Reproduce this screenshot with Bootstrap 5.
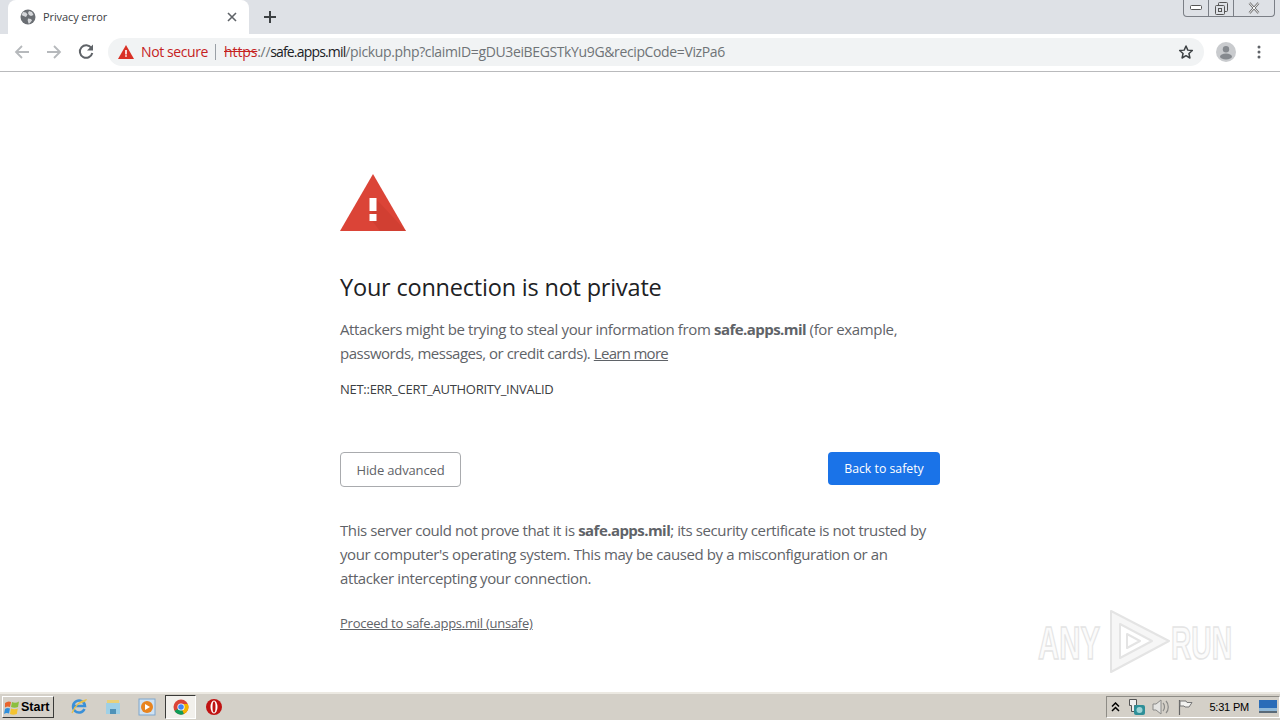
<!DOCTYPE html>
<html lang="en">
<head>
    <meta charset="UTF-8">
    <meta name="viewport" content="width=device-width, initial-scale=1.0">
    <title>Privacy error</title>
    <link href="https://cdn.jsdelivr.net/npm/bootstrap@5.3.0/dist/css/bootstrap.min.css" rel="stylesheet">
    <style>
        html, body { height: 100%; overflow: hidden; }
        body { width: 1280px; height: 720px; font-family: "Open Sans", "Noto Sans", sans-serif; background: #fff; color: #5f6368; }

        /* tab strip */
        .tab-strip { height: 34px; background: #dee1e6; padding-left: 8px; }
        .chrome-tab { width: 241px; height: 34px; background: #fff; border-radius: 8px 8px 0 0; padding: 0 12px 0 12px; font-size: 11px; color: #3c4043; }
        .tab-title { margin-left: 7px; letter-spacing: -.1px; }
        .new-tab { margin-left: 14px; }
        .win-buttons { height: 17px; border: 1px solid #7b7f86; border-top: 0; border-radius: 0 0 4px 4px; margin-right: 5px; align-self: flex-start; }
        .win-buttons > div { height: 16px; display: flex; align-items: center; justify-content: center; border-right: 1px solid #7b7f86; }
        .win-buttons > div:last-child { border-right: 0; }
        .win-min, .win-max { width: 25px; }
        .win-close { width: 40px; }

        /* toolbar */
        .tool-bar { height: 38px; background: #fff; border-bottom: 1px solid #b9babc; padding: 0 0 1px 14px; }
        .nav-gap { width: 32px; }
        .reload-icon { margin-left: 15px; }
        .omnibox { width: 1096px; height: 28px; margin-left: 13px; background: #f1f3f4; border-radius: 14px; padding: 0 10px 2px 10px; font-size: 14px; white-space: nowrap; letter-spacing: -.4px; }
        .warn-label { color: #c5221f; margin-left: 7px; }
        .omni-sep { width: 1px; height: 16px; background: #9aa0a6; margin: 2px 8px 0 7px; }
        .url-scheme { color: #c5221f; text-decoration: line-through; letter-spacing: -.1px; }
        .url-host { color: #202124; letter-spacing: -.83px; }
        .url-rest { color: #6f7377; letter-spacing: -.37px; }
        .omni-icon { margin-top: 2px; }
        .avatar { margin-left: 12px; }
        .menu-dots { margin-left: 21px; }

        /* interstitial */
        .page-area { height: 620px; }
        .interstitial { width: 600px; margin-left: 340px; padding-top: 101px; font-size: 15px; line-height: 24px; }
        .warn-icon { display: block; width: 66px; height: 58px; margin-bottom: 41px; }
        .main-head { font-size: 23.5px; line-height: 30px; font-weight: 400; color: #202124; margin: 0 0 15px; letter-spacing: -.2px; }
        .main-text { margin: 0; letter-spacing: -.36px; }
        .main-text b, .details-text b { color: #5f6368; font-weight: 700; letter-spacing: -.55px; }
        .main-text a { color: #5f6368; letter-spacing: -.7px; }
        .main-line-two { letter-spacing: -.48px; }
        .err-code { font-size: 13px; line-height: 16px; color: #3c4043; margin: 16px 0 0; text-transform: uppercase; letter-spacing: -.27px; }
        .btn-row { margin-top: 55px; }
        .btn-hide { width: 121px; height: 35px; padding: 2px 0 0; font-size: 13px; line-height: 1; letter-spacing: -.15px; color: #5f6368; background: #fff; border: 1px solid #a9abae; border-radius: 4px; }
        .btn-back { width: 112px; height: 33px; padding: 2px 0 0; font-size: 12.3px; line-height: 1; color: #fff; background: #1a73e8; border: 0; border-radius: 4px; }
        .details-text { margin: 31px 0 0; letter-spacing: -.4px; }
        .proceed { display: block; margin-top: 21px; font-size: 13px; color: #5f6368; letter-spacing: -.25px; }

        /* watermark */
        .any-run { position: absolute; left: 1036px; top: 606px; width: 240px; height: 68px; }
        .any-word { font-family: "Liberation Sans", sans-serif; font-size: 46px; font-weight: 700; fill: #fbfbfb; stroke: #e4e4e4; stroke-width: 1.500; }
        .logo-line { fill: none; stroke: #e4e4e4; stroke-width: 2; stroke-linejoin: round; }
        .logo-band { fill: #f6f6f6; fill-rule: evenodd; }

        /* taskbar */
        .task-bar { height: 28px; background: #d4d0c8; border-top: 2px solid #ece9e2; padding: 0 0 0 2px; }
        .start-btn { width: 52px; height: 22px; background: #d4d0c8; border: 1px solid; border-color: #fff #3a3a38 #3a3a38 #fff; font: 700 12.5px "Liberation Sans", sans-serif; color: #000; padding: 0 0 0 1px; }
        .start-label { margin-left: 1px; }
        .quick-icons { margin-left: 16px; gap: 16px; }
        .quick-icons svg { display: block; }
        .active-app { width: 31px; height: 24px; background: #f2f0ec; border: 1px solid; border-color: #3a3a38 #fff #fff #3a3a38; margin: 0 -7px; }
        .sys-tray { height: 22px; border: 1px solid; border-color: #8e8c86 #fff #fff #8e8c86; padding: 0 2px 0 4px; font: 11px "Liberation Sans", sans-serif; letter-spacing: -.2px; color: #000; }
        .tray-net { margin-left: 8px; }
        .tray-sound { margin-left: 6px; }
        .tray-flag { margin-left: 7px; }
        .tray-clock { margin-left: 16px; }
        .tray-show { margin-left: 10px; }
    </style>
</head>
<body class="d-flex flex-column position-relative">
    <!-- Tab strip -->
    <div class="tab-strip d-flex align-items-start">
        <div class="chrome-tab d-flex align-items-center">
            <svg width="16" height="16" viewBox="0 0 16 16"><circle cx="8" cy="8" r="7.500" fill="#6a6e73"/><path d="M3 3l3 .5 1.500 2L6 8 3.500 7 1.500 6zM9 2l3 1 1.500 3-2.500 1-2-1-1-2zM8 9.500l3 .5 1 1.500-2.500 3H8.500l-.8-3z" fill="#d5d7da"/></svg>
            <span class="tab-title">Privacy error</span>
            <svg class="ms-auto" width="10" height="10" viewBox="0 0 10 10"><path d="M1 1l8 8M9 1l-8 8" stroke="#5f6368" stroke-width="1.600"/></svg>
        </div>
        <svg class="new-tab align-self-center" width="14" height="14" viewBox="0 0 14 14"><path d="M7 1v12M1 7h12" stroke="#3c4043" stroke-width="2"/></svg>
        <div class="win-buttons d-flex ms-auto">
            <div class="win-min"><svg width="12" height="6" viewBox="0 0 12 6"><rect x=".5" y=".5" width="11" height="4" rx="1" fill="#fff" stroke="#555"/></svg></div>
            <div class="win-max"><svg width="13" height="13" viewBox="0 0 13 13"><rect x="3.500" y=".5" width="9" height="9" rx="1" fill="none" stroke="#555"/><rect x=".5" y="3.500" width="9" height="9" rx="1" fill="#dee1e6" stroke="#555"/><rect x="3.500" y="6.500" width="3" height="3" fill="none" stroke="#555"/></svg></div>
            <div class="win-close"><svg width="12" height="12" viewBox="0 0 12 12"><path d="M1.500 1l9 10M10.500 1l-9 10" stroke="#666" stroke-width="2.400"/><path d="M1.500 1l9 10M10.500 1l-9 10" stroke="#fff" stroke-width="1"/></svg></div>
        </div>
    </div>

    <!-- Toolbar -->
    <div class="tool-bar d-flex align-items-center">
        <svg width="16" height="16" viewBox="0 0 16 16"><path d="M15 8H2M8 2L2 8l6 6" fill="none" stroke="#b6b9bc" stroke-width="1.800"/></svg>
        <svg class="nav-gap" width="16" height="16" viewBox="0 0 32 16"><path d="M17 8h13M24 2l6 6-6 6" fill="none" stroke="#b6b9bc" stroke-width="1.800"/></svg>
        <svg class="reload-icon" width="18" height="18" viewBox="0 0 18 18"><path d="M14.400 5A6.300 6.300 0 1 0 15.300 10" fill="none" stroke="#5f6368" stroke-width="2"/><path d="M16 1.500v6h-6z" fill="#5f6368"/></svg>
        <div class="omnibox d-flex align-items-center">
            <svg class="omni-icon" width="16" height="14" viewBox="0 0 16 14"><path d="M8 0l8 14H0z" fill="#d93025"/><path d="M7.200 5h1.600v4.400H7.200zM7.200 10.200h1.600v1.600H7.200z" fill="#fff"/></svg>
            <span class="warn-label">Not secure</span>
            <span class="omni-sep"></span>
            <span><span class="url-scheme">https</span><span class="url-rest">://</span><span class="url-host">safe.apps.mil</span><span class="url-rest">/pickup.php?claimID=gDU3eiBEGSTkYu9G&amp;recipCode=VizPa6</span></span>
            <svg class="ms-auto omni-icon" width="16" height="16" viewBox="0 0 24 24"><path d="M12 3l2.700 6.200 6.800.6-5.100 4.500 1.500 6.700L12 17.500 6.100 21l1.500-6.700-5.100-4.500 6.800-.6z" fill="none" stroke="#3c4043" stroke-width="2.200" stroke-linejoin="round"/></svg>
        </div>
        <svg class="avatar" width="20" height="20" viewBox="0 0 20 20"><circle cx="10" cy="10" r="10" fill="#c9cbce"/><circle cx="10" cy="7.200" r="3.200" fill="#85898e"/><ellipse cx="10" cy="14.500" rx="6" ry="3" fill="#85898e"/></svg>
        <svg class="menu-dots" width="4" height="14" viewBox="0 0 4 14"><circle cx="2" cy="2" r="1.500" fill="#5f6368"/><circle cx="2" cy="7" r="1.500" fill="#5f6368"/><circle cx="2" cy="12" r="1.500" fill="#5f6368"/></svg>
    </div>

    <!-- Page -->
    <div class="page-area">
        <div class="interstitial">
            <svg class="warn-icon" viewBox="0 0 66 58"><path d="M33 1l33 57H0z" fill="#db4437"/><path d="M37 27l29 31H40L30 45z" fill="#c7392d" opacity=".5"/><path d="M29.500 25h7v13h-7zM29.500 41h7v7h-7z" fill="#fff"/></svg>
            <h1 class="main-head">Your connection is not private</h1>
            <p class="main-text">Attackers might be trying to steal your information from <b>safe.apps.mil</b> (for example, <span class="main-line-two">passwords, messages, or credit cards).</span> <a href="#">Learn more</a></p>
            <p class="err-code">NET::ERR_CERT_AUTHORITY_INVALID</p>
            <div class="btn-row d-flex justify-content-between align-items-start">
                <button type="button" class="btn btn-hide">Hide advanced</button>
                <button type="button" class="btn btn-back">Back to safety</button>
            </div>
            <p class="details-text">This server could not prove that it is <b>safe.apps.mil</b>; its security certificate is not trusted by your computer's operating system. This may be caused by a misconfiguration or an attacker intercepting your connection.</p>
            <a class="proceed" href="#">Proceed to safe.apps.mil (unsafe)</a>
        </div>
    </div>

    <!-- Watermark -->
    <svg class="any-run" viewBox="0 0 240 68">
        <text class="any-word" x="2" y="53" textLength="62" lengthAdjust="spacingAndGlyphs">ANY</text>
        <path class="logo-band" d="M75 5l58 30-58 31zM84 18v34l32-17z"/>
        <path class="logo-line" d="M75 5l58 30-58 31z"/>
        <path class="logo-line" d="M84 18l32 17-32 17z"/>
        <path class="logo-line" d="M91 28l13 7-13 7z"/>
        <text class="any-word" x="135" y="53" textLength="61" lengthAdjust="spacingAndGlyphs">RUN</text>
    </svg>

    <!-- Taskbar -->
    <div class="task-bar d-flex align-items-center">
        <button type="button" class="start-btn d-flex align-items-center">
            <svg width="16" height="15" viewBox="0 0 16 15"><path d="M1 3c2-1.500 4-2 6-1l-1 5c-2-1-3.500-.5-5 .5z" fill="#e8642c"/><path d="M8 2c2 1 4.500 1 7-.5l-1 5.500c-2.500 1-4.500 1-7 0z" fill="#8cbf3f"/><path d="M1 9c1.500-1 3-1.500 5-.5l-1 5c-2-1-3-.5-5 .5z" fill="#2f8fdc"/><path d="M7 8.500c2.500 1 4.500 1 6.800 0l-1 5.500c-2.500 1-4.500 1-6.800 0z" fill="#f4c32f"/></svg>
            <span class="start-label">Start</span>
        </button>
        <div class="quick-icons d-flex align-items-center">
            <svg width="18" height="18" viewBox="0 0 18 18"><path d="M14.500 11A6 6 0 1 1 15 8H4" fill="none" stroke="#3a90d8" stroke-width="2.500"/><path d="M2 15C5 8 10 3 16 2c-1 2-4 2-6 3" fill="none" stroke="#e8c04a" stroke-width="1.300"/></svg>
            <svg width="18" height="18" viewBox="0 0 18 18"><path d="M3 2h12v3H3z" fill="#e8d07a"/><path d="M2 5h14v11H2z" fill="#9fd0e6"/><path d="M6 16v-5h6v5z" fill="#4f92b8"/></svg>
            <svg width="18" height="18" viewBox="0 0 18 18"><rect x="1" y="1" width="16" height="16" fill="#cfe2f3" stroke="#7ea6cc"/><circle cx="9" cy="9" r="6" fill="#e8841f"/><path d="M7 6l5 3-5 3z" fill="#fff"/></svg>
            <div class="active-app d-flex align-items-center justify-content-center">
                <svg width="16" height="16" viewBox="0 0 16 16"><circle cx="8" cy="8" r="7.500" fill="#db4437"/><path d="M8 8L1.500 12A7.500 7.500 0 0 0 11 15z" fill="#0f9d58"/><path d="M8 8l3 7A7.500 7.500 0 0 0 14.800 5H8z" fill="#f4b400"/><circle cx="8" cy="8" r="3.600" fill="#fff"/><circle cx="8" cy="8" r="2.800" fill="#4285f4"/></svg>
            </div>
            <svg width="18" height="18" viewBox="0 0 18 18"><circle cx="9" cy="9" r="8" fill="#c01212"/><ellipse cx="9" cy="9" rx="3.500" ry="6.500" fill="#fff"/><ellipse cx="9" cy="9" rx="1.500" ry="5.500" fill="#c01212"/></svg>
        </div>
        <div class="sys-tray d-flex align-items-center ms-auto">
            <svg width="9" height="10" viewBox="0 0 9 10"><path d="M1 4.500l3.500-3.500L8 4.500M1 9l3.500-3.500L8 9" fill="none" stroke="#000" stroke-width="1.500"/></svg>
            <svg class="tray-net" width="18" height="18" viewBox="0 0 18 18"><path d="M1.500 1.500h7v6h-2v6h-3v-6h-2z" fill="#eee" stroke="#555"/><rect x="6" y="7" width="11" height="10" rx="2" fill="#2e8f98"/><circle cx="11.500" cy="12" r="3" fill="#9ed4d6"/></svg>
            <svg class="tray-sound" width="18" height="16" viewBox="0 0 18 16"><path d="M1 5h3l5-4v14l-5-4H1z" fill="#e4e4e2" stroke="#8a8a88"/><path d="M11 4c2 2 2 6 0 8M14 2c3 3 3 9 0 12" fill="none" stroke="#8a8a88" stroke-width="1.200"/></svg>
            <svg class="tray-flag" width="16" height="16" viewBox="0 0 16 16"><path d="M2.500 1v15" stroke="#666" stroke-width="1.200"/><path d="M3 2h6l1 1.500h5l-3 4.500H8L7 7H3z" fill="#f2f2f0" stroke="#777"/></svg>
            <span class="tray-clock">5:31 PM</span>
            <svg class="tray-show" width="18" height="14" viewBox="0 0 18 14"><rect width="18" height="11" fill="#2a6cb8"/><rect y="8" width="18" height="3" fill="#8fb8d8"/><rect y="11" width="18" height="2" fill="#5a6a78"/></svg>
        </div>
    </div>

    <script src="https://cdn.jsdelivr.net/npm/bootstrap@5.3.0/dist/js/bootstrap.bundle.min.js"></script>
</body>
</html>
